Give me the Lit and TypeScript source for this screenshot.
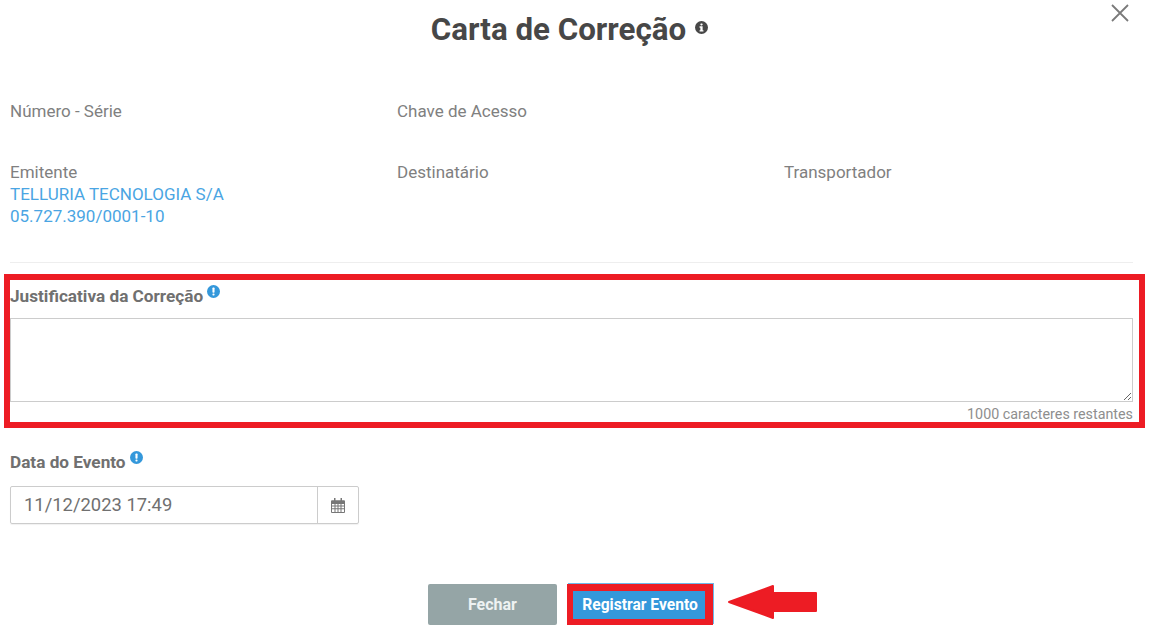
import { LitElement, html, css } from "lit";
import { customElement } from "lit/decorators.js";

const alertIcon = (cls: string) => html`<svg class=${cls} viewBox="0 0 16 16" aria-hidden="true">
  <circle cx="8" cy="8" r="8" fill="currentColor"></circle>
  <rect x="6.7" y="3" width="2.6" height="6.6" rx="1" fill="#fff"></rect>
  <rect x="6.7" y="10.6" width="2.6" height="2.4" rx="1" fill="#fff"></rect>
</svg>`;

const infoIcon = (cls: string) => html`<svg class=${cls} viewBox="0 0 16 16" aria-hidden="true">
  <circle cx="8" cy="8" r="8" fill="currentColor"></circle>
  <rect x="6.6" y="3" width="2.8" height="2.4" rx="1" fill="#fff"></rect>
  <path d="M5.600 6.600H9.400V11.400H10.400V13H5.600V11.400H6.600V8.200H5.600Z" fill="#fff"></path>
</svg>`;

@customElement("app-root")
export class AppRoot extends LitElement {
  static styles = css`
    :host {
      display: block;
      position: relative;
      width: 1151px;
      height: 630px;
      overflow: hidden;
      background: #fff;
      font-family: Roboto, "Liberation Sans", sans-serif;
      color: #808080;
    }
    .page {
      display: flex;
      flex-direction: column;
      padding: 0 18px 0 10px;
    }
    .head {
      height: 60px;
      display: flex;
      justify-content: center;
      align-items: center;
      gap: 9px;
      padding-right: 4px;
    }
    h1 {
      margin: 0;
      font-size: 31.300px;
      line-height: 60px;
      font-weight: 700;
      color: #474747;
    }
    .title-info {
      width: 13px;
      height: 13px;
      color: #474747;
      margin-bottom: 5px;
    }
    .close {
      position: absolute;
      top: 3px;
      right: 21px;
      width: 20px;
      height: 20px;
      color: #7a7a7a;
    }
    .grid {
      display: grid;
      grid-template-columns: 387px 387px 1fr;
      font-size: 17px;
      line-height: 22px;
    }
    .r1 { margin-top: 40px; }
    .r2 { margin-top: 39px; }
    .val { color: #4aa5e3; }
    .rule {
      height: 1px;
      background: #eee;
      margin-top: 35px;
    }
    .just {
      position: relative;
      margin-top: 22px;
    }
    .just::after {
      content: "";
      position: absolute;
      inset: -11px -12px -6px -6px;
      border: 6px solid #ed1c24;
      pointer-events: none;
    }
    .lbl {
      display: flex;
      align-items: flex-start;
      gap: 4px;
      font-size: 17.200px;
      line-height: 22px;
      font-weight: 700;
      color: #707070;
    }
    .lbl-info {
      width: 13px;
      height: 13px;
      color: #3498db;
      margin-top: 0;
    }
    textarea {
      display: block;
      box-sizing: border-box;
      width: 100%;
      height: 84px;
      margin-top: 11px;
      border: 1px solid #ccc;
      background: #fff;
      padding: 0;
      outline: none;
      resize: vertical;
    }
    .count {
      text-align: right;
      font-size: 14.300px;
      line-height: 16px;
      margin-top: 4px;
      color: #8e8e8e;
    }
    .date { margin-top: 29px; }
    .input {
      display: flex;
      box-sizing: border-box;
      width: 349px;
      height: 38px;
      margin-top: 13px;
      border: 1px solid #ccc;
      border-radius: 2px;
      box-shadow: 0 1px 1px rgba(0, 0, 0, 0.06);
      font-size: 18.400px;
      color: #707070;
    }
    .input .text {
      flex: 1;
      display: flex;
      align-items: center;
      padding: 0 0 2px 13px;
    }
    .input .addon {
      width: 40px;
      display: flex;
      align-items: center;
      justify-content: center;
      border-left: 1px solid #ccc;
    }
    .cal { width: 14px; height: 15px; color: #777; }
    .actions {
      display: flex;
      margin-top: 60px;
      padding-left: 418px;
      align-items: flex-start;
    }
    button {
      font-family: inherit;
      font-weight: 700;
      color: #fff;
      border: none;
      padding: 0;
    }
    .fechar {
      width: 129px;
      height: 41px;
      font-size: 16px;
      background: #95a5a6;
      border-radius: 2px;
      color: #eef2f2;
    }
    .registrar {
      width: 146px;
      height: 41px;
      margin-left: 10px;
      box-sizing: border-box;
      padding-left: 2px;
      font-size: 15.600px;
      background: #3498db;
      border-style: solid;
      border-color: #ed1c24;
      border-width: 7px 8px 6px 6px;
      box-shadow: 1px -1px 0 #6db8ea;
    }
    .arrow {
      width: 90px;
      height: 36px;
      margin-left: 15px;
      color: #ed1c24;
    }
  `;

  render() {
    return html`
      <div class="page">
        <header class="head">
          <h1>Carta de Correção</h1>
          ${infoIcon("title-info")}
        </header>
        <svg class="close" viewBox="0 0 20 20" aria-hidden="true">
          <path d="M2 2 18 18M18 2 2 18" stroke="currentColor" stroke-width="1.8" fill="none"></path>
        </svg>

        <div class="grid r1">
          <div>Número - Série</div>
          <div>Chave de Acesso</div>
        </div>
        <div class="grid r2">
          <div>
            Emitente
            <div class="val">TELLURIA TECNOLOGIA S/A</div>
            <div class="val">05.727.390/0001-10</div>
          </div>
          <div>Destinatário</div>
          <div>Transportador</div>
        </div>
        <div class="rule"></div>

        <section class="just">
          <div class="lbl">Justificativa da Correção ${alertIcon("lbl-info")}</div>
          <textarea></textarea>
          <div class="count">1000 caracteres restantes</div>
        </section>

        <section class="date">
          <div class="lbl">Data do Evento ${alertIcon("lbl-info")}</div>
          <div class="input">
            <div class="text">11/12/2023 17:49</div>
            <div class="addon">
              <svg class="cal" viewBox="0 0 14 14" preserveAspectRatio="none" aria-hidden="true">
                <path fill="currentColor" fill-rule="evenodd" d="M3 0h1.500v2h5V0H11v2h2a1 1 0 0 1 1 1v10a1 1 0 0 1-1 1H1a1 1 0 0 1-1-1V3a1 1 0 0 1 1-1h2zM1 5.500v1.500h2.500V5.500zM4.500 5.500v1.500h2V5.500zM7.500 5.500v1.500h2V5.500zM10.500 5.500v1.500H13V5.500zM1 8v1.500h2.500V8zM4.500 8v1.500h2V8zM7.500 8v1.500h2V8zM10.500 8v1.500H13V8zM1 10.500V13h2.500v-2.500zM4.500 10.500V13h2v-2.500zM7.500 10.500V13h2v-2.500zM10.500 10.500V13H13v-2.500z"></path>
              </svg>
            </div>
          </div>
        </section>

        <div class="actions">
          <button class="fechar">Fechar</button>
          <button class="registrar">Registrar Evento</button>
          <svg class="arrow" viewBox="0 0 90 36" aria-hidden="true">
            <path fill="currentColor" stroke="currentColor" stroke-width="2" stroke-linejoin="round" d="M1 18 45 2V9H88V27H45V34Z"></path>
          </svg>
        </div>
      </div>
    `;
  }
}
